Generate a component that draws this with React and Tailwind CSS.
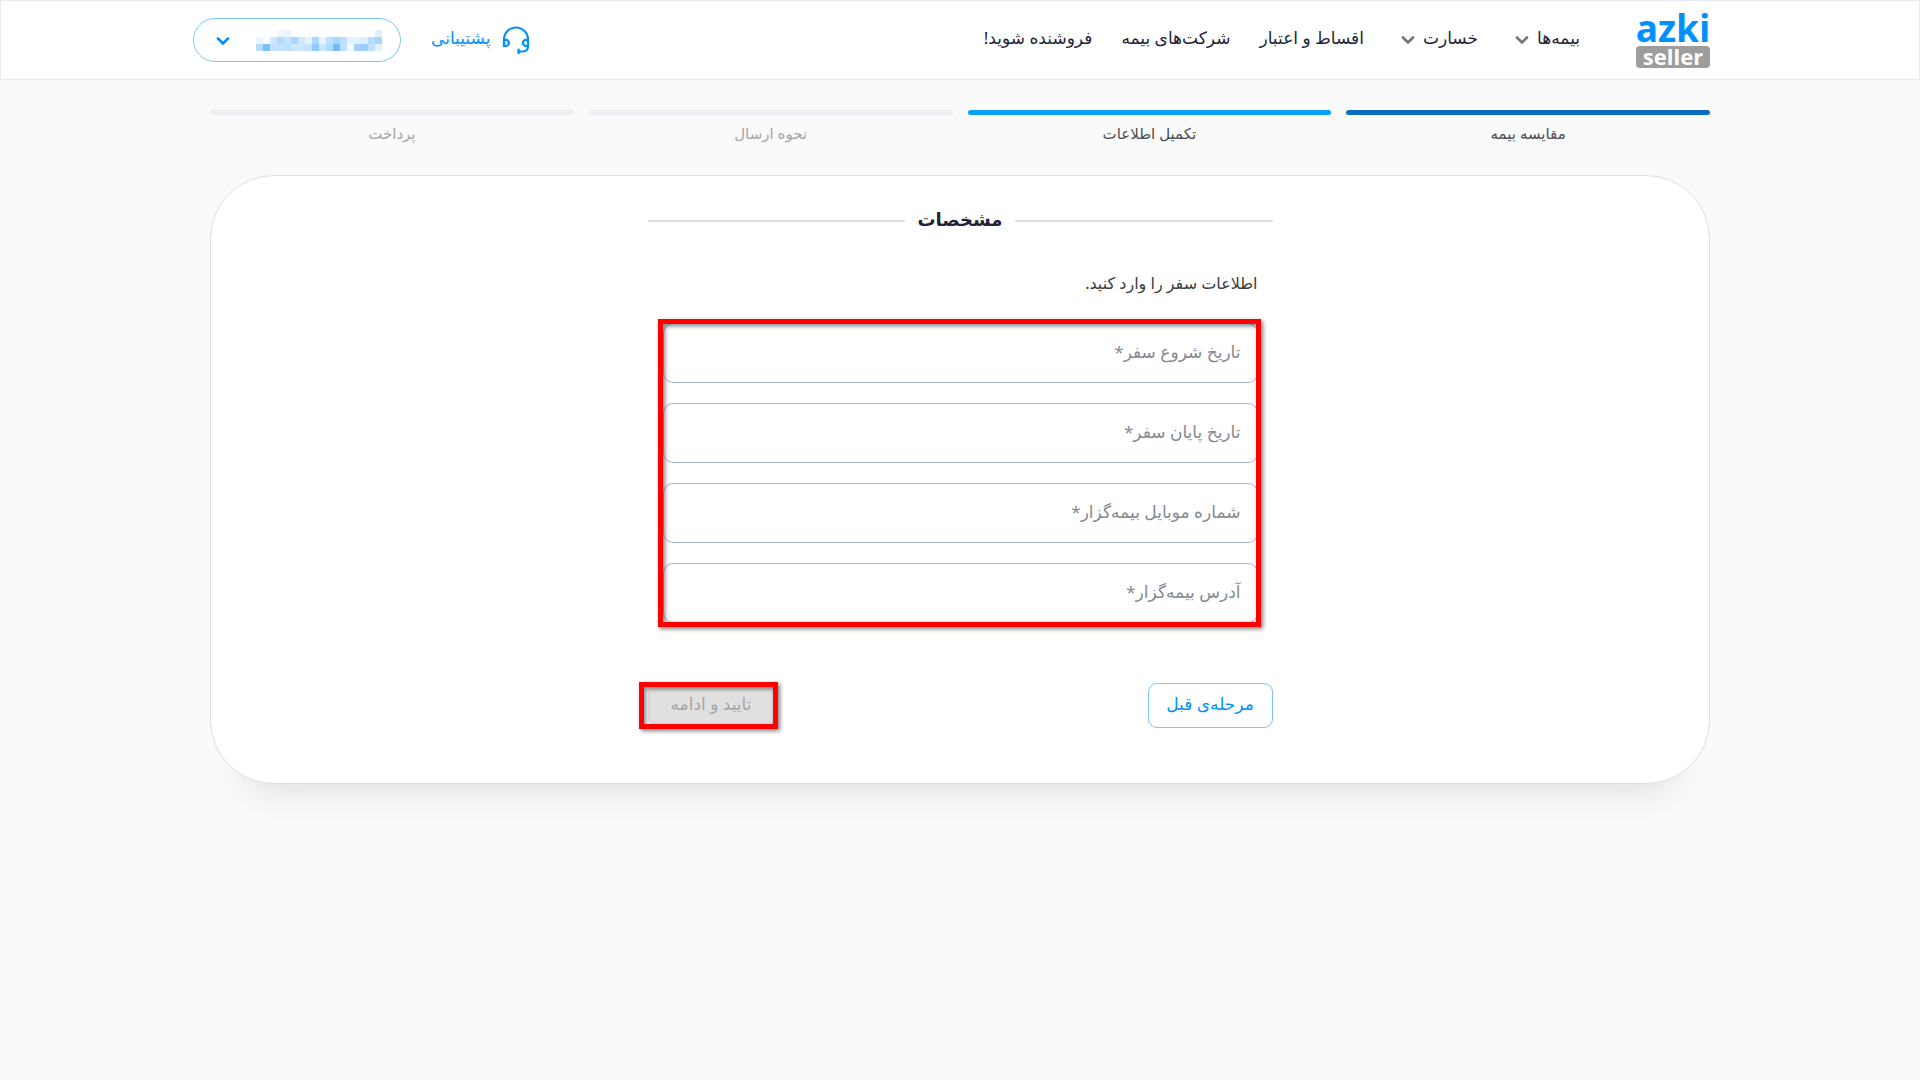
const navItems = [
  { label: "بیمه‌ها", hasMenu: true },
  { label: "خسارت", hasMenu: true },
  { label: "اقساط و اعتبار" },
  { label: "شرکت‌های بیمه" },
  { label: "فروشنده شوید!" },
];

const steps = [
  { label: "مقایسه بیمه", bar: "bg-[#0a6cc4]", text: "text-[#4a4c52]" },
  { label: "تکمیل اطلاعات", bar: "bg-[#04a0fb]", text: "text-[#4a4c52]" },
  { label: "نحوه ارسال", bar: "bg-[#eeeff2]", text: "text-[#a3a5ab]" },
  { label: "پرداخت", bar: "bg-[#eeeff2]", text: "text-[#a3a5ab]" },
];

const fields = [
  { id: "start-date", label: "تاریخ شروع سفر*", type: "text" },
  { id: "end-date", label: "تاریخ پایان سفر*", type: "text" },
  { id: "mobile", label: "شماره موبایل بیمه‌گزار*", type: "tel" },
  { id: "address", label: "آدرس بیمه‌گزار*", type: "text" },
];

// Pixelated user name, one colour per 7px cell
const maskedName = [
  ["#fff", "#fff", "#fefefe", "#f0f7ff", "#ebf5ff", "#fff", "#fff", "#fff", "#fff", "#fff", "#fff", "#fff", "#fff", "#fff", "#fff", "#fff", "#fff", "#e0f0ff"],
  ["#eaf5ff", "#fcfeff", "#cfe6ff", "#b0daff", "#c5e3ff", "#a9d7ff", "#cfe7ff", "#e4f2ff", "#aad8ff", "#ebf4ff", "#bcdfff", "#a6d7ff", "#bcdeff", "#e0f1ff", "#e0f1ff", "#dcefff", "#b8dcff", "#a5d5ff"],
  ["#b8dcff", "#78c0ff", "#c3e2ff", "#c3e2ff", "#bbe0ff", "#cde5ff", "#c6e9ff", "#c5e2ff", "#8ecbff", "#c6e3ff", "#b1daff", "#6ebcff", "#bfe1ff", "#f2fbff", "#a4d2ff", "#9ad0ff", "#c0e0ff", "#e2f2ff"],
];

function Chevron({ className }) {
  return (
    <svg viewBox="0 0 14 10" className={className} fill="none" stroke="currentColor" strokeWidth="2.6" strokeLinecap="round" strokeLinejoin="round" aria-hidden="true">
      <path d="M2 2.5 7 7.5 12 2.5" />
    </svg>
  );
}

function Headset() {
  return (
    <svg viewBox="0 0 28 28" className="size-7" fill="none" stroke="currentColor" strokeWidth="2.2" strokeLinecap="round" strokeLinejoin="round" aria-hidden="true">
      <path d="M2 20V13.5a12 12 0 0 1 24 0v7a5 5 0 0 1-4.6 5H16.6" />
      <path d="M16.6 23.6v3.6" />
      <path d="M2 13.8h1.8a3.1 3.1 0 0 1 0 6.2H2z" />
      <path d="M26 13.8h-2a3.1 3.1 0 0 0 0 6.2h2z" />
    </svg>
  );
}

function Logo() {
  return (
    <a href="#" dir="ltr" className="flex w-[74px] flex-col items-center font-['Open_Sans','Noto_Sans',sans-serif] font-bold">
      <span className="text-[37px] leading-[32px] text-[#0091ff]">azki</span>
      <span className="mt-[2px] flex h-[22px] w-full items-center justify-center rounded-[4px] bg-[#9d9d9d] pb-[3px] text-[22px] leading-[20px] text-white">
        seller
      </span>
    </a>
  );
}

function Header() {
  return (
    <header className="border border-[#e8eaf2] bg-white">
      <div className="mx-auto flex h-[78px] max-w-[1500px] items-center text-[17px]">
        <Logo />
        <nav className="mr-[56px] flex items-center gap-[29px]">
          {navItems.map((item) =>
            item.hasMenu ? (
              <button key={item.label} type="button" className="ml-2 flex items-center gap-2 pb-1">
                {item.label}
                <Chevron className="mt-1 h-[10px] w-[14px] text-[#757575]" />
              </button>
            ) : (
              <a key={item.label} href="#" className="pb-1">
                {item.label}
              </a>
            )
          )}
        </nav>
        <div className="mr-auto -ml-[17px] flex items-center gap-[30px] text-[#0091ff]">
          <a href="#" className="flex items-center gap-3">
            <Headset />
            <span className="pb-1">پشتیبانی</span>
          </a>
          <button type="button" aria-label="حساب کاربری" className="flex h-[44px] w-[208px] items-center justify-between rounded-full border border-[#7cc4fb] pr-[18px] pl-[22px]">
            <svg viewBox="0 0 126 21" className="h-[21px] w-[126px]" shapeRendering="crispEdges" aria-hidden="true">
              {maskedName.map((row, y) =>
                row.map((color, x) => <rect key={`${x}-${y}`} x={x * 7} y={y * 7} width="7" height="7" fill={color} />)
              )}
            </svg>
            <Chevron className="mt-[2px] h-[10px] w-[14px]" />
          </button>
        </div>
      </div>
    </header>
  );
}

function Steps() {
  return (
    <ol className="grid grid-cols-4 gap-[15px]">
      {steps.map((step) => (
        <li key={step.label} className={`text-center text-[15px] leading-[20px] ${step.text}`}>
          <div className={`mb-[8px] h-[5px] rounded-full ${step.bar}`} />
          {step.label}
        </li>
      ))}
    </ol>
  );
}

function Field({ id, label, type }) {
  return (
    <div className="relative">
      <input id={id} type={type} className="block h-[60px] w-full rounded-[10px] border border-[#a3b4d9] bg-white px-[17px] outline-none" />
      <label htmlFor={id} className="absolute top-[17px] right-[17px] text-[17px] leading-[24px] text-[#868990]">
        {label}
      </label>
    </div>
  );
}

// Red marker frame drawn over a part of the form
function Highlight({ className }) {
  return (
    <div className={`pointer-events-none absolute border-[5px] border-[#ff0000] drop-shadow-[2px_2px_2px_rgba(0,0,0,0.5)] ${className}`} />
  );
}

export default function App() {
  return (
    <div dir="rtl" lang="fa" className="min-h-screen bg-[#fafafa] font-['Noto_Sans','DejaVu_Sans',sans-serif] text-[16px] leading-[24px] text-[#212338]">
      <Header />
      <main className="mx-auto max-w-[1500px] pt-[30px]">
        <Steps />
        <section className="mt-[32px] rounded-[64px] border border-[#dedede] bg-white pt-[29px] pb-[55px] shadow-[0_40px_30px_-30px_rgba(20,30,50,0.1)]">
          <form className="mx-auto max-w-[625px]">
            <div className="flex items-center gap-3">
              <div className="h-[2px] flex-1 bg-[#dedede]" />
              <h1 className="pb-1 text-[18px] leading-[28px] font-bold">مشخصات</h1>
              <div className="h-[2px] flex-1 bg-[#dedede]" />
            </div>
            <div className="px-[15px]">
              <p className="mt-[34px] mb-[28px] text-[#3c3c3e]">اطلاعات سفر را وارد کنید.</p>
              <div className="relative flex flex-col gap-5">
                {fields.map((field) => (
                  <Field key={field.id} {...field} />
                ))}
                <Highlight className="-inset-y-[4px] -right-[3px] -left-[5px]" />
              </div>
            </div>
            <div className="mt-[60px] flex items-center justify-between text-[17px]">
              <button type="button" className="h-[45px] w-[125px] rounded-[9px] border border-[#7cc4fb] pb-1 text-[#0091ff]">
                مرحله‌ی قبل
              </button>
              <div className="relative">
                <button type="submit" disabled className="block h-[43px] w-[127px] rounded-[9px] bg-[#e0e0e0] pb-1 text-[#a6a6a6]">
                  تایید و ادامه
                </button>
                <Highlight className="-inset-y-[2px] -right-[3px] -left-[9px]" />
              </div>
            </div>
          </form>
        </section>
      </main>
    </div>
  );
}
